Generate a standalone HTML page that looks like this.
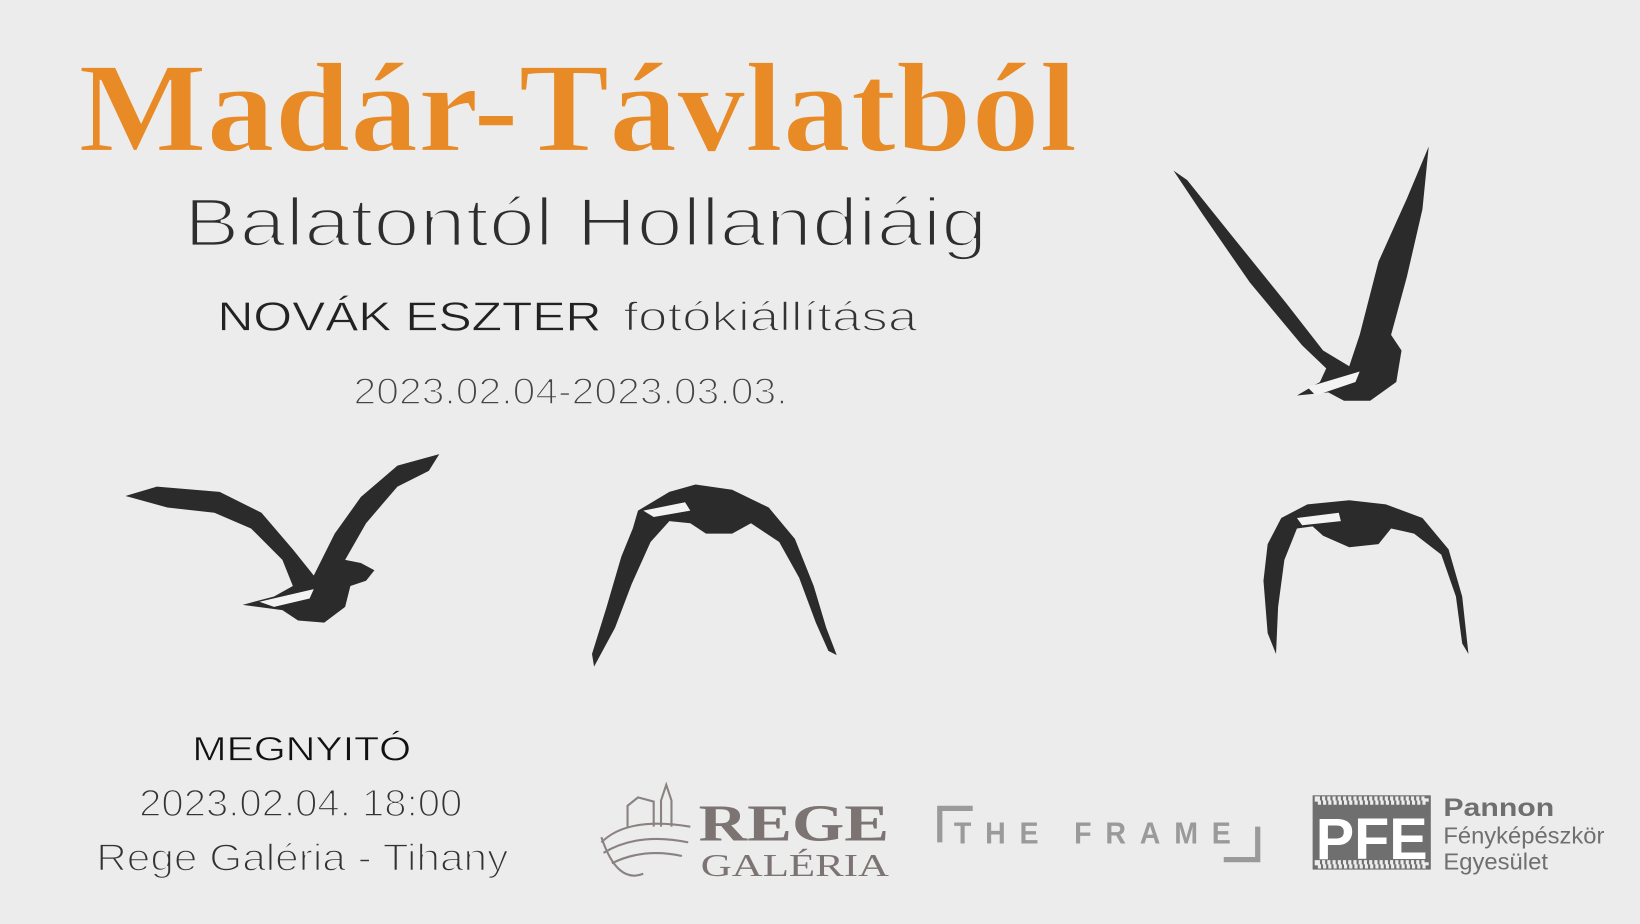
<!DOCTYPE html>
<html><head><meta charset="utf-8"><style>
html,body{margin:0;padding:0;background:#ececec;overflow:hidden}
svg{display:block}
</style></head><body>
<svg width="1640" height="924" viewBox="0 0 1568 883" preserveAspectRatio="none" xmlns="http://www.w3.org/2000/svg">
<rect width="1568" height="883" fill="#ececec"/>
<text x="75" y="144" font-family="Liberation Serif, serif" font-weight="bold" font-size="122" fill="#e88a26" textLength="955" lengthAdjust="spacingAndGlyphs" stroke="#ececec" stroke-width="1.5">Madár-Távlatból</text>
<text x="176" y="235" font-family="Liberation Sans, sans-serif" font-size="66" fill="#2e2e2e" textLength="768" lengthAdjust="spacingAndGlyphs" stroke="#ececec" stroke-width="2.6">Balatontól Hollandiáig</text>
<text x="208" y="316" font-family="Liberation Sans, sans-serif" font-size="39" fill="#222" textLength="367" lengthAdjust="spacingAndGlyphs" stroke="#ececec" stroke-width="0.6">NOVÁK ESZTER</text>
<text x="596" y="316" font-family="Liberation Sans, sans-serif" font-size="39" fill="#333" textLength="281" lengthAdjust="spacingAndGlyphs" stroke="#ececec" stroke-width="1.5">fotókiállítása</text>
<text x="338" y="386" font-family="Liberation Sans, sans-serif" font-size="35" fill="#444" textLength="415" lengthAdjust="spacingAndGlyphs" stroke="#ececec" stroke-width="1.5">2023.02.04-2023.03.03.</text>
<text x="184" y="727" font-family="Liberation Sans, sans-serif" font-size="33" fill="#111" textLength="209" lengthAdjust="spacingAndGlyphs" stroke="#ececec" stroke-width="0.6">MEGNYITÓ</text>
<text x="133" y="780" font-family="Liberation Sans, sans-serif" font-size="36" fill="#333" textLength="309" lengthAdjust="spacingAndGlyphs" stroke="#ececec" stroke-width="1.5">2023.02.04. 18:00</text>
<text x="92" y="832" font-family="Liberation Sans, sans-serif" font-size="36" fill="#333" textLength="394" lengthAdjust="spacingAndGlyphs" stroke="#ececec" stroke-width="1.5">Rege Galéria - Tihany</text>

<!-- birds -->
<g fill="#2b2b2b">
<path d="M1122,163 L1135,172 L1180,228 L1230,290 L1265,335 L1290,350 L1300,320 L1318,250 L1345,190 L1366,140 L1360,200 L1345,265 L1330,320 L1340,335 L1335,365 L1310,383 L1285,383 L1270,375 L1240,378 L1262,365 L1268,352 L1245,330 L1195,270 L1150,205 Z"/>
<path d="M1250,370 L1300,355 L1296,365 L1258,378 Z" fill="#f3f3f3"/>
<path d="M120,474 L150,465 L210,470 L250,490 L280,525 L300,550 L320,510 L345,475 L380,445 L420,434 L410,450 L380,465 L350,500 L330,535 L345,538 L358,545 L350,555 L335,560 L330,580 L310,595 L285,593 L270,583 L232,578 L262,570 L280,560 L270,535 L240,505 L205,490 L160,485 Z"/>
<path d="M248,575 L300,563 L296,572 L262,580 Z" fill="#f3f3f3"/>
<path d="M610,488 L640,470 L665,463 L700,468 L735,485 L760,515 L778,560 L790,600 L800,626 L792,622 L780,595 L764,552 L745,518 L718,500 L700,510 L675,510 L660,500 L640,498 L622,518 L604,558 L588,600 L568,637 L566,625 L580,580 L594,532 L605,505 Z"/>
<path d="M615,488 L655,480 L660,488 L625,494 Z" fill="#f3f3f3"/>
<path d="M1225,495 L1250,482 L1290,478 L1325,482 L1360,495 L1385,525 L1398,570 L1404,625 L1398,615 L1392,570 L1378,530 L1352,510 L1330,505 L1318,520 L1290,523 L1265,512 L1255,503 L1240,505 L1228,535 L1222,580 L1220,625 L1212,605 L1208,555 L1212,520 Z"/>
<path d="M1240,495 L1280,490 L1282,498 L1245,502 Z" fill="#f3f3f3"/>
</g>

<!-- REGE logo -->
<g fill="none" stroke="#8a8280" stroke-width="2">
<path d="M575,805 Q600,780 660,790"/><path d="M577,815 Q610,795 658,805"/><path d="M585,825 Q615,810 652,818"/>
<path d="M600,790 L600,770 L610,762 L625,766 L625,790"/><path d="M632,790 L632,765 L637,750 L642,765 L642,790"/>
<path d="M575,800 Q590,845 615,835"/>
</g>
<text x="668" y="803" font-family="Liberation Serif, serif" font-weight="bold" font-size="50" fill="#7c7472" textLength="182" lengthAdjust="spacingAndGlyphs">REGE</text>
<text x="670" y="837" font-family="Liberation Serif, serif" font-size="30" fill="#7c7472" textLength="180" lengthAdjust="spacingAndGlyphs">GALÉRIA</text>

<!-- THE FRAME -->
<path d="M896,770 L930,770 L930,775 L901,775 L901,805 L896,805 Z" fill="#9a9a9a"/>
<path d="M1200,790 L1205,790 L1205,824 L1170,824 L1170,819 L1200,819 Z" fill="#9a9a9a"/>
<text x="912" y="806" font-family="Liberation Sans, sans-serif" font-weight="bold" font-size="29" fill="#9a9a9a" textLength="278" lengthAdjust="spacingAndGlyphs" letter-spacing="14">THE FRAME</text>

<!-- PFE -->
<rect x="1255" y="760" width="113" height="71" fill="#6f6f6f"/>
<rect x="1259" y="763" width="105" height="4" fill="none" stroke="#ececec" stroke-dasharray="3,2" stroke-width="4"/>
<rect x="1259" y="824" width="105" height="4" fill="none" stroke="#ececec" stroke-dasharray="3,2" stroke-width="4"/>
<text x="1258" y="821" font-family="Liberation Sans, sans-serif" font-weight="bold" font-size="56" fill="#fff" textLength="107" lengthAdjust="spacingAndGlyphs">PFE</text>
<text x="1380" y="780" font-family="Liberation Sans, sans-serif" font-weight="bold" font-size="24" fill="#6f6f6f" textLength="106" lengthAdjust="spacingAndGlyphs">Pannon</text>
<text x="1380" y="806" font-family="Liberation Sans, sans-serif" font-size="22" fill="#6f6f6f" textLength="154" lengthAdjust="spacingAndGlyphs">Fényképészkör</text>
<text x="1380" y="831" font-family="Liberation Sans, sans-serif" font-size="22" fill="#6f6f6f" textLength="100" lengthAdjust="spacingAndGlyphs">Egyesület</text>
</svg>
</body></html>
